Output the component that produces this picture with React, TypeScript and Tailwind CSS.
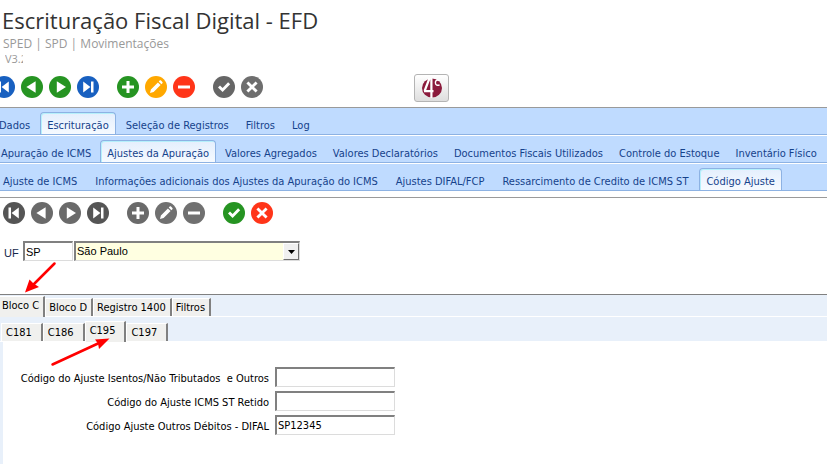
import type { ReactNode } from "react";

const UI_FONT = "font-['DejaVu_Sans_Condensed','DejaVu_Sans',sans-serif]";

type IconName = "first" | "prev" | "next" | "last" | "add" | "edit" | "remove" | "confirm" | "cancel";

const glyphs: Record<IconName, ReactNode> = {
  first: <path d="M5.5 5.5H8v11H5.5zM15.8 5.5v11L8.6 11z" />,
  prev: <path d="M14.6 5.2v11.6L5.4 11z" />,
  next: <path d="M7.8 5.2v11.6L17 11z" />,
  last: <path d="M14 5.5h2.5v11H14zM6.2 5.5v11l7.2-5.5z" />,
  add: <path d="M9.5 5h3v4.5H17v3h-4.5V17h-3v-4.5H5v-3h4.5z" />,
  edit: <path d="M5 17l.9-3.6 7-7 2.7 2.7-7 7zM13.7 5.6l1-1c.4-.4.9-.4 1.3 0l1.4 1.4c.4.4.4.9 0 1.3l-1 1z" />,
  remove: <path d="M5 9.5h12v3H5z" />,
  confirm: <path d="M5 11.4l2-2 2.6 2.5 5.5-5.7 2.1 2-7.6 7.9z" />,
  cancel: <path d="M7.4 5.4 11 9l3.6-3.6 2 2L13 11l3.6 3.6-2 2L11 13l-3.6 3.6-2-2L9 11 5.4 7.4z" />,
};

type Tool = { icon: IconName; label: string; color: string };

const mainTools: Tool[][] = [
  [
    { icon: "first", label: "Primeiro", color: "text-[#1860c0]" },
    { icon: "prev", label: "Anterior", color: "text-[#269422]" },
    { icon: "next", label: "Próximo", color: "text-[#269422]" },
    { icon: "last", label: "Último", color: "text-[#1860c0]" },
  ],
  [
    { icon: "add", label: "Incluir", color: "text-[#269422]" },
    { icon: "edit", label: "Alterar", color: "text-[#ffa800]" },
    { icon: "remove", label: "Excluir", color: "text-[#ff3519]" },
  ],
  [
    { icon: "confirm", label: "Confirmar", color: "text-[#666666]" },
    { icon: "cancel", label: "Cancelar", color: "text-[#6e6e6e]" },
  ],
];

const detailTools: Tool[][] = [
  [
    { icon: "first", label: "Primeiro", color: "text-[#555555]" },
    { icon: "prev", label: "Anterior", color: "text-[#6a6a6a]" },
    { icon: "next", label: "Próximo", color: "text-[#6a6a6a]" },
    { icon: "last", label: "Último", color: "text-[#555555]" },
  ],
  [
    { icon: "add", label: "Incluir", color: "text-[#6a6a6a]" },
    { icon: "edit", label: "Alterar", color: "text-[#707070]" },
    { icon: "remove", label: "Excluir", color: "text-[#707070]" },
  ],
  [
    { icon: "confirm", label: "Confirmar", color: "text-[#269422]" },
    { icon: "cancel", label: "Cancelar", color: "text-[#ff3519]" },
  ],
];

function Toolbar({ groups }: { groups: Tool[][] }) {
  return (
    <div className="flex gap-[18px]">
      {groups.map((group, i) => (
        <div key={i} className="flex gap-1.5">
          {group.map((t) => (
            <button key={t.icon} type="button" aria-label={t.label} className={t.color}>
              <svg viewBox="0 0 22 22" className="block size-[22px]">
                <circle cx="11" cy="11" r="11" fill="currentColor" />
                <g fill="#fff">{glyphs[t.icon]}</g>
              </svg>
            </button>
          ))}
        </div>
      ))}
    </div>
  );
}

type TabsProps = { tabs: string[]; active: string; spacing: string };

function RibbonTabs({ tabs, active, spacing }: TabsProps) {
  return (
    <div className="overflow-hidden border-b border-[#8db2e3] bg-[#bfdbff]">
      <div role="tablist" className={`flex h-[26px] items-end ${spacing}`}>
        {tabs.map((tab) => (
          <button
            key={tab}
            type="button"
            role="tab"
            aria-selected={tab === active}
            className={
              "h-[22px] shrink-0 whitespace-pre rounded-t-sm border border-b-0 px-1.5 pt-1 text-[11px] leading-4 text-[#15428b] " +
              (tab === active
                ? "border-[#8db2e3] bg-linear-to-b from-[#e4effd] to-[#f6faff] shadow-[inset_1px_1px_0_#b5f0fb]"
                : "border-transparent")
            }
          >
            {tab}
          </button>
        ))}
      </div>
    </div>
  );
}

function ClassicTabs({ tabs, active, spacing }: TabsProps) {
  return (
    <div role="tablist" className={`flex h-[22px] items-end border-b border-white ${spacing}`}>
      {tabs.map((tab) => (
        <button
          key={tab}
          type="button"
          role="tab"
          aria-selected={tab === active}
          className={
            "shrink-0 border-t border-l border-r-2 border-t-white border-l-white border-r-[#808080] bg-[#f0f0ee] text-[11px] leading-4 text-black " +
            (tab === active ? "-mb-px h-[21px] pb-0.5" : "h-[18px]")
          }
        >
          {tab}
        </button>
      ))}
    </div>
  );
}

const sunken =
  "block h-5 border-t-2 border-l-2 border-r border-b border-t-[#808080] border-l-[#808080] border-r-[#dcdcdc] border-b-[#dcdcdc] pl-px text-[11px] text-black outline-none";

const fields = [
  { id: "isentos", label: "Código do Ajuste Isentos/Não Tributados  e Outros", value: "" },
  { id: "icms-st", label: "Código do Ajuste ICMS ST Retido", value: "" },
  { id: "difal", label: "Código Ajuste Outros Débitos - DIFAL", value: "SP12345" },
];

export default function App() {
  return (
    <div className={`relative flex min-h-screen flex-col overflow-hidden bg-white ${UI_FONT}`}>
      <header className="font-['Open_Sans',sans-serif]">
        <h1 className="pt-1 pl-0.5 text-[22px] leading-8 text-[#333]">Escrituração Fiscal Digital - EFD</h1>
        <p className="pl-[3px] text-xs leading-4 text-[#999]">SPED | SPD | Movimentações</p>
        <p className="ml-[5px] w-[18px] overflow-hidden text-[11px] leading-[14px] text-[#999]">V3.2</p>
      </header>

      <div className="flex h-[42px] items-start border-b border-[#9a9a9a] pt-2">
        <div className="-ml-[7px] pt-0.5">
          <Toolbar groups={mainTools} />
        </div>
        <button
          type="button"
          aria-label="4C"
          className="ml-[151px] flex h-7 w-[35px] items-center justify-center rounded-[3px] border border-[#b4b4b4] bg-linear-to-b from-white to-[#dedede]"
        >
          <svg viewBox="0 0 22 22" className="size-[22px]">
            <ellipse cx="11" cy="11" rx="10" ry="9.5" fill="#8b1a3c" />
            <path d="M10.4 1v20M3 14.2h9.5M8.6 1 3.6 14" stroke="#fff" strokeWidth="2.2" fill="none" />
            <path d="M18.4 3.6c-2.4-1.4-4.2 0-4 2.4.2 2.200 2 2.800 4.200 1.800" stroke="#fff" strokeWidth="1.4" fill="none" />
          </svg>
        </button>
      </div>

      <nav className="space-y-px">
        <RibbonTabs
          tabs={["Dados", "Escrituração", "Seleção de Registros", "Filtros", "Log"]}
          active="Escrituração"
          spacing="-ml-2 gap-[3px]"
        />
        <RibbonTabs
          tabs={["Apuração de ICMS", "Ajustes da Apuração", "Valores Agregados", "Valores Declaratórios", "Documentos Fiscais Utilizados", "Controle do Estoque", "Inventário Físico"]}
          active="Ajustes da Apuração"
          spacing="-ml-1.5 gap-0.5"
        />
        <RibbonTabs
          tabs={["Ajuste de ICMS", "Informações adicionais dos Ajustes da Apuração do ICMS", "Ajustes DIFAL/FCP", "Ressarcimento de Credito de ICMS ST", "Código Ajuste"]}
          active="Código Ajuste"
          spacing="-ml-1 gap-1"
        />
      </nav>

      <section className="mt-1.5 border-t border-[#9a9a9a] pt-1 pb-[33px]">
        <div className="pl-[3px]">
          <Toolbar groups={detailTools} />
        </div>
        <div className="mt-[17px] flex items-start pl-1 font-['Liberation_Sans',sans-serif]">
          <label htmlFor="uf" className="w-[19px] pt-1.5 text-[11px] leading-3 text-[#15284b]">
            UF
          </label>
          <input id="uf" defaultValue="SP" className={`w-[50px] ${sunken}`} />
          <div className="relative ml-px w-[226px]">
            <select aria-label="Estado" className={`w-full appearance-none bg-[#ffffe1] ${sunken}`}>
              <option>São Paulo</option>
            </select>
            <span className="pointer-events-none absolute top-0.5 right-px flex h-[17px] w-4 items-center justify-center border border-t-white border-l-white border-r-[#707070] border-b-[#707070] bg-[#f0f0f0]">
              <svg viewBox="0 0 7 4" className="h-1 w-[7px]">
                <path d="M0 0h7L3.5 4z" />
              </svg>
            </span>
          </div>
        </div>
      </section>

      <section className="flex flex-1 flex-col border-t border-[#808080] bg-[#e8f0fa]">
        <ClassicTabs
          tabs={["Bloco C", "Bloco D", "Registro 1400", "Filtros"]}
          active="Bloco C"
          spacing="-ml-0.5 *:pr-1 *:pl-[3px]"
        />
        <div className="mt-[3px]">
          <ClassicTabs tabs={["C181", "C186", "C195", "C197"]} active="C195" spacing="pl-px *:pr-[9px] *:pl-1" />
        </div>
        <form className="ml-[3px] flex flex-1 flex-col gap-1 bg-white pt-[25px]">
          {fields.map((f) => (
            <div key={f.id} className="flex items-start gap-1.5">
              <label htmlFor={f.id} className="w-[266px] whitespace-pre pt-1.5 text-right text-[11px] leading-3 text-black">
                {f.label}
              </label>
              <input id={f.id} defaultValue={f.value} className={`w-[120px] ${sunken}`} />
            </div>
          ))}
        </form>
      </section>

      {/* red pointers over the active tabs */}
      <svg viewBox="0 0 120 110" className="pointer-events-none absolute top-[260px] left-0 h-[110px] w-[120px]" fill="#f00" stroke="#f00">
        <path d="M54.5 3.5 34 24M52.5 104.5 98 83.5" strokeWidth="2.5" strokeLinecap="round" />
        <path d="M25 32.5 29.5 19.5l4 4 5.5 3.5z" stroke="none" />
        <path d="M109.5 78.5 95 79.5l3 4 1 5.5z" stroke="none" />
      </svg>
    </div>
  );
}
